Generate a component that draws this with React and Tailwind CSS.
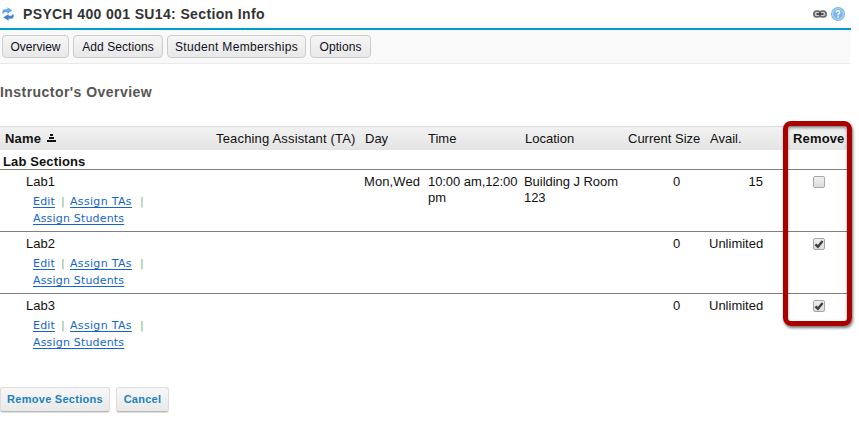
import React from "react";

const COLS =
  "grid grid-cols-[216px_149px_63px_97px_103px_82px_83px_58px] w-[851px]";

const ROWS = [
  { name: "Lab1", day: "Mon,Wed", time: "10:00 am,12:00 pm", location: "Building J Room 123", avail: "15", checked: false },
  { name: "Lab2", avail: "Unlimited", checked: true },
  { name: "Lab3", avail: "Unlimited", checked: true },
];

function RefreshIcon() {
  return (
    <svg width="12" height="14" viewBox="0 0 12 14" className="ml-[2px] shrink-0">
      <path d="M0.3 6.6V4.5Q0.8 2.3 3 2.3H5.4V0.2L10.2 3.6L5.4 7V5.2H3Q2 5.2 1.8 6.6Z" fill="#64abea" />
      <path d="M11.7 7.4V9.5Q11.2 11.7 9 11.7H6.6V13.8L1.2 10.4L6.6 7V8.8H9Q10 8.8 10.2 7.4Z" fill="#4384d2" />
    </svg>
  );
}

function LinkIcon() {
  return (
    <svg width="14" height="8" viewBox="0 0 14 8">
      <rect x="0.9" y="1" width="6.4" height="6" rx="2.8" fill="#ccc" stroke="#626262" strokeWidth="1.6" />
      <rect x="6.7" y="1" width="6.4" height="6" rx="2.8" fill="#ccc" stroke="#626262" strokeWidth="1.6" />
      <path d="M3.5 4H10.5" stroke="#333" strokeWidth="1.6" />
    </svg>
  );
}

function HelpIcon() {
  return (
    <svg width="14" height="14" viewBox="0 0 14 14">
      <circle cx="7" cy="7" r="6.4" fill="#c4e2f8" stroke="#7dbbe0" strokeWidth="1.2" />
      <circle cx="7" cy="7" r="4.9" fill="#7db4f0" />
      <path d="M5.2 5.4Q5.3 3.7 7 3.7T8.8 5.3Q8.8 6.3 7.7 6.9Q7 7.3 7 8.2" fill="none" stroke="#fff" strokeWidth="1.4" />
      <rect x="6.3" y="9.2" width="1.5" height="1.5" fill="#fff" />
    </svg>
  );
}

function SortIcon() {
  return (
    <svg width="9" height="8" viewBox="0 0 9 8" shapeRendering="crispEdges" className="ml-[6px] -mt-px">
      <path d="M3 0H6V2H3ZM2 3H7V5H2ZM0 6H9V8H0Z" fill="#111" />
    </svg>
  );
}

function Checkbox({ checked }) {
  return (
    <span className="block w-3 h-3 rounded-[2px] border border-[#a6a6a6] bg-linear-to-b from-[#efefef] to-[#dcdcdc]">
      {checked && (
        <svg width="10" height="10" viewBox="0 0 10 10" className="block">
          <path d="M1.4 5.3L3.9 7.7L8.6 2" fill="none" stroke="#3f3f3f" strokeWidth="2.4" />
        </svg>
      )}
    </span>
  );
}

function ToolButton({ className, children }) {
  return (
    <button className={`${className} h-[23px] rounded-[4px] border border-[#cccccc] bg-linear-to-b from-[#f6f6f6] to-[#e8e8e8] text-[12px] leading-[22px] text-[#111122] whitespace-nowrap`}>
      {children}
    </button>
  );
}

function ActionButton({ width, children }) {
  return (
    <button className={`${width} h-[25px] rounded-[3px] border border-[#dddddd] border-b-[#b8b8b8] bg-linear-to-b from-[#f7f7f7] to-[#e9e9e9] pb-px text-[11px] font-bold leading-[22px] tracking-[0.27px] text-[#2181bd] whitespace-nowrap shadow-[0_1px_1px_#ddd]`}>
      {children}
    </button>
  );
}

function ActionLink({ children }) {
  return (
    <a className="text-[#1565cc] underline decoration-1 underline-offset-[2px] [text-decoration-skip-ink:none]">{children}</a>
  );
}

function SectionRow({ row, last }) {
  return (
    <div className={`${COLS} h-[62px] pt-[4px] leading-4 border-b ${last ? "border-transparent" : "border-[#808080]"}`}>
      <div>
        <div className="pl-[26px]">{row.name}</div>
        <div className="pl-[33px] pt-[3px] text-[11px] leading-[17px] tracking-[0.18px] font-['Verdana','DejaVu_Sans',sans-serif] whitespace-nowrap">
          <div className="flex">
            <span className="w-[21px]"><ActionLink>Edit</ActionLink></span>
            <span className="w-[16px] pl-[7px] text-[#79b58a]">|</span>
            <span className="w-[62px] tracking-[0.33px]"><ActionLink>Assign TAs</ActionLink></span>
            <span className="pl-[8px] text-[#79b58a]">|</span>
          </div>
          <ActionLink>Assign Students</ActionLink>
        </div>
      </div>
      <div />
      <div className="-ml-px tracking-[0.1px]">{row.day}</div>
      <div className="w-[92px] tracking-[-0.07px]">{row.time}</div>
      <div className="-ml-px w-[98px] tracking-[-0.05px]">{row.location}</div>
      <div className="pl-[45px]">0</div>
      <div className="-ml-px pr-[30px] text-right">{row.avail}</div>
      <div className="pl-[20px] pt-[2px]">
        <Checkbox checked={row.checked} />
      </div>
    </div>
  );
}

export default function App() {
  return (
    <div className="relative w-[859px] h-[423px] overflow-hidden bg-white text-[13px] text-[#111] font-['Liberation_Sans',Arial,sans-serif]">
      <header className="flex items-center w-[851px] h-[30px] border-b-2 border-[#009fcb]">
        <RefreshIcon />
        <h1 className="ml-[9px] grow text-[14px] font-bold tracking-[0.36px] text-[#333] whitespace-nowrap">
          PSYCH 400 001 SU14: Section Info
        </h1>
        <LinkIcon />
        <span className="ml-[4px] mr-[6px]"><HelpIcon /></span>
      </header>

      <nav className="flex gap-1 w-[850px] h-[34px] pl-[2px] pt-[5px] bg-[#f9f9f9] border-b border-[#e9e9e9]">
        <ToolButton className="w-[67px]">Overview</ToolButton>
        <ToolButton className="w-[90px] tracking-[0.07px]">Add Sections</ToolButton>
        <ToolButton className="w-[139px] tracking-[0.33px]">Student Memberships</ToolButton>
        <ToolButton className="w-[61px] tracking-[0.1px]">Options</ToolButton>
      </nav>

      <h2 className="h-[62px] pt-[19px] text-[14px] leading-[18px] font-bold tracking-[0.45px] text-[#555]">
        Instructor's Overview
      </h2>

      <div className={`${COLS} h-[24px] border-t border-[#dcdcdc] bg-linear-to-b from-[#f2f2f2] to-[#e4e4e4] leading-[23px] whitespace-nowrap`}>
        <div className="flex items-center pl-[5px] font-bold tracking-[0.2px]">Name<SortIcon /></div>
        <div className="tracking-[0.17px]">Teaching Assistant (TA)</div>
        <div>Day</div>
        <div>Time</div>
        <div>Location</div>
        <div>Current Size</div>
        <div>Avail.</div>
        <div className="font-bold tracking-[0.15px]">Remove</div>
      </div>
      <div className="w-[851px] h-[20px] pl-[3px] border-b border-[#808080] font-bold leading-[23px] tracking-[0.12px]">Lab Sections</div>

      {ROWS.map((row, i) => (
        <SectionRow key={row.name} row={row} last={i === ROWS.length - 1} />
      ))}

      <div className="flex gap-[6px] pt-[31px]">
        <ActionButton width="w-[110px]">Remove Sections</ActionButton>
        <ActionButton width="w-[53px]">Cancel</ActionButton>
      </div>

      <div className="absolute left-[783px] top-[121px] w-[69px] h-[205px] rounded-[8px] border-[5px] border-[#a90000] shadow-[1px_2px_3px_rgba(0,0,0,0.55),inset_0_2px_3px_rgba(0,0,0,0.4)]" />
    </div>
  );
}
